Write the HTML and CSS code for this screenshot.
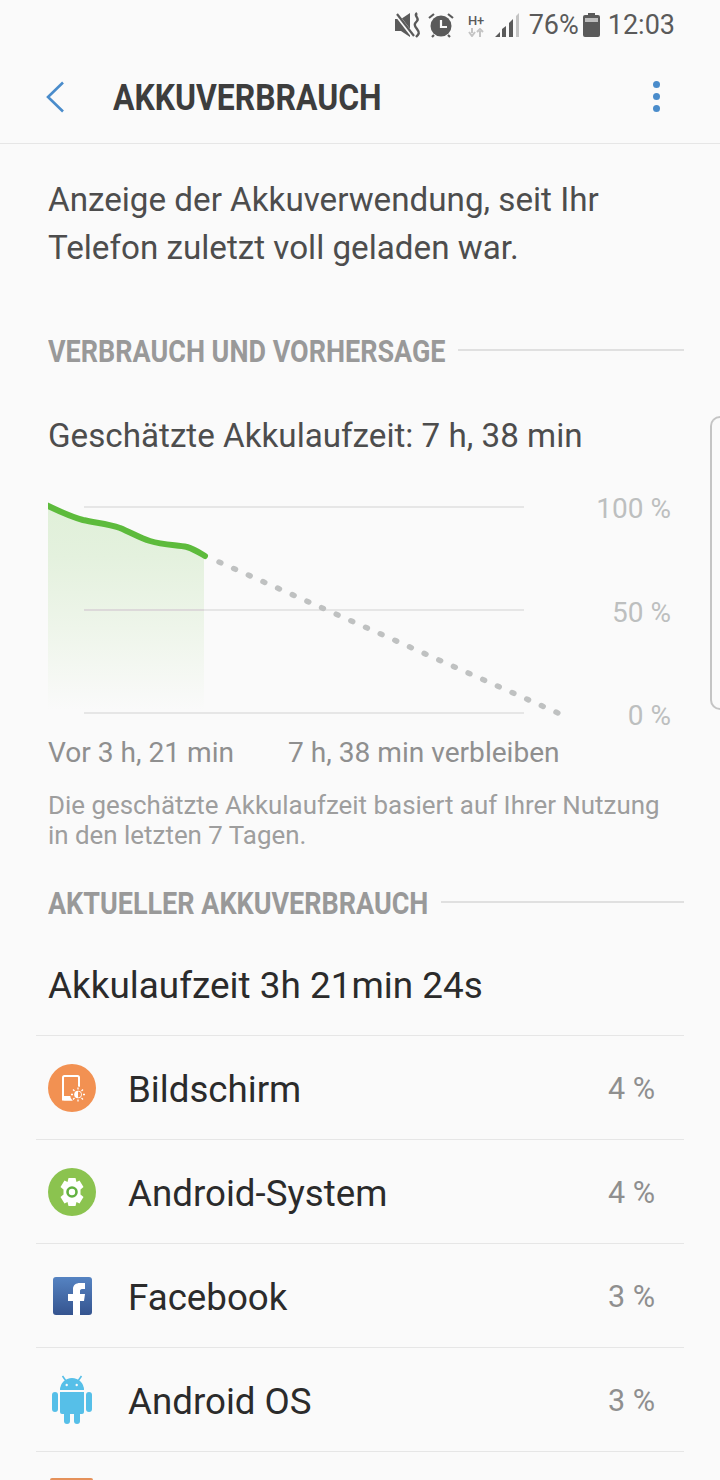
FILE: index.html
```html
<!DOCTYPE html>
<html lang="de">

<head>
    <meta charset="UTF-8">
    <title>Akkuverbrauch</title>
    <link rel="stylesheet" href="styles.css">
</head>

<body>
    <div class="status-bar">
        <svg class="st-mute" width="28" height="26" viewBox="0 0 28 26">
            <path d="M1 7h6l9-6v24l-9-6H1z" fill="#5a5a5a"/>
            <path d="M2 2l17 22" stroke="#fafafa" stroke-width="4"/>
            <path d="M3 2l17 22" stroke="#5a5a5a" stroke-width="2.2"/>
            <path d="M23 1c-4 3 3 5 0 8s-3 4 0 8 2 5-1 8" fill="none" stroke="#5a5a5a" stroke-width="2.4"/>
        </svg>
        <svg class="st-alarm" width="26" height="26" viewBox="0 0 26 26">
            <circle cx="13" cy="14" r="10.5" fill="#5a5a5a"/>
            <path d="M1 6l5-4M25 6l-5-4M6 23l-2 2M20 23l2 2" stroke="#5a5a5a" stroke-width="2.2"/>
            <path d="M13 8v7h6" fill="none" stroke="#fafafa" stroke-width="2.2"/>
        </svg>
        <div class="st-net">
            <span class="st-hplus">H+</span>
            <svg width="16" height="9" viewBox="0 0 16 9">
                <path d="M4 9V4M1 5l3-4 3 4" fill="none" stroke="#c4c4c4" stroke-width="2" transform="rotate(180 4 4.5)"/>
                <path d="M12 9V3M9 4l3-3 3 3" fill="none" stroke="#c4c4c4" stroke-width="2"/>
            </svg>
        </div>
        <svg class="st-signal" width="25" height="24" viewBox="0 0 25 24">
            <path d="M0 24l5-5v5zM7 24v-8l4-3v11zM14 24V10l4-4v18z" fill="#5a5a5a"/>
            <path d="M21 24V3l3-3v24z" fill="#c4c4c4"/>
        </svg>
        <span class="st-text st-pct">76%</span>
        <svg class="st-batt" width="17" height="24" viewBox="0 0 17 24">
            <path d="M5 0h7v2h3a2 2 0 0 1 2 2v18a2 2 0 0 1-2 2H2a2 2 0 0 1-2-2V4a2 2 0 0 1 2-2h3z" fill="#5a5a5a"/>
            <rect x="2" y="5" width="13" height="4" fill="#bdbdbd"/>
        </svg>
        <span class="st-text st-time">12:03</span>
    </div>

    <header class="app-bar">
        <svg class="back-icon" width="20" height="32" viewBox="0 0 20 32">
            <path d="M18 1.500L3 16l15 14.500" fill="none" stroke="#4a8ccb" stroke-width="2.600"/>
        </svg>
        <h1 class="app-title">AKKUVERBRAUCH</h1>
        <div class="more-icon"><i></i><i></i><i></i></div>
    </header>

    <p class="intro">Anzeige der Akkuverwendung, seit Ihr Telefon zuletzt voll geladen war.</p>

    <div class="section-head section-first"><span>VERBRAUCH UND VORHERSAGE</span></div>

    <p class="estimate">Geschätzte Akkulaufzeit: 7 h, 38 min</p>

    <svg class="chart" width="720" height="246" viewBox="0 0 720 246">
        <defs>
            <linearGradient id="fade" x1="0" y1="0" x2="0" y2="1">
                <stop offset="0" stop-color="#e0f0d9"/>
                <stop offset="0.25" stop-color="#e4f1de"/>
                <stop offset="0.6" stop-color="#eef5ea"/>
                <stop offset="1" stop-color="#fafafa"/>
            </linearGradient>
            <clipPath id="plot"><rect x="48" y="0" width="200" height="240"/></clipPath>
        </defs>
        <path d="M84 17H524M84 120H524M84 223H524" stroke="#e6e6e6" stroke-width="2"/>
        <path d="M48 16C60 22 72 27 83 30C96 33 108 34 120 38C132 43 140 48 150 51C163 55 176 55 187 57C194 59 200 63 204 65V220H48Z" fill="url(#fade)"/>
        <path d="M84 120H204" stroke="#dcd9d9" stroke-width="2"/>
        <path d="M40 12C60 22 72 27 83 30C96 33 108 34 120 38C132 43 140 48 150 51C163 55 176 55 187 57C194 59 200 63 205 66" fill="none" stroke="#5dbb3c" stroke-width="6" stroke-linecap="round" clip-path="url(#plot)"/>
        <path d="M219 72L558 223" fill="none" stroke="#bfc1c1" stroke-width="5.500" stroke-linecap="round" stroke-dasharray="2 14.040"/>
        <text class="axis" x="671" y="28" text-anchor="end">100 %</text>
        <text class="axis" x="671" y="132" text-anchor="end">50 %</text>
        <text class="axis" x="671" y="235" text-anchor="end">0 %</text>
    </svg>

    <div class="range">
        <span>Vor 3 h, 21 min</span>
        <span>7 h, 38 min verbleiben</span>
    </div>

    <p class="note">Die geschätzte Akkulaufzeit basiert auf Ihrer Nutzung in den letzten 7 Tagen.</p>

    <div class="section-head section-second"><span>AKTUELLER AKKUVERBRAUCH</span></div>

    <p class="uptime">Akkulaufzeit 3h 21min 24s</p>

    <ul class="usage">
        <li class="usage-row">
            <svg class="app-icon" width="48" height="48" viewBox="0 0 48 48">
                <circle cx="24" cy="24" r="24" fill="#f29152"/>
                <rect x="15" y="12" width="16" height="23.500" rx="1.500" fill="none" stroke="#fff" stroke-width="2"/>
                <rect x="14" y="32" width="12" height="4.500" fill="#fff"/>
                <circle cx="30" cy="30.500" r="8" fill="#f29152"/>
                <circle cx="30" cy="30.500" r="3.800" fill="#fff"/>
                <path d="M30 27.500a3 3 0 0 1 0 6z" fill="#f29152"/>
                <path d="M30 23.500v2M30 35.500v2M23 30.500h2M35 30.500h2M25 25.500l1.500 1.500M35 25.500L33.500 27M25 35.500l1.500-1.500M35 35.500L33.500 34" stroke="#fff" stroke-width="1.300"/>
            </svg>
            <span class="app-name">Bildschirm</span>
            <span class="app-pct">4 %</span>
        </li>
        <li class="usage-row">
            <svg class="app-icon" width="48" height="48" viewBox="0 0 48 48">
                <circle cx="24" cy="24" r="24" fill="#8bc34f"/>
                <path d="M20.500 10h7l1 4 3-1.500 4 6.500-3 2.500v5l3 2.500-4 6.500-3-1.500-1 4h-7l-1-4-3 1.500-4-6.500 3-2.500v-5l-3-2.500 4-6.500 3 1.500z" fill="#fff"/>
                <circle cx="24" cy="24" r="4.500" fill="#fff" stroke="#63b241" stroke-width="2.600"/>
            </svg>
            <span class="app-name">Android-System</span>
            <span class="app-pct">4 %</span>
        </li>
        <li class="usage-row">
            <svg class="app-icon" width="48" height="48" viewBox="0 0 48 48">
                <defs>
                    <linearGradient id="fb" x1="0" y1="0" x2="0" y2="1">
                        <stop offset="0" stop-color="#5583c2"/>
                        <stop offset="1" stop-color="#35548f"/>
                    </linearGradient>
                </defs>
                <rect x="5" y="5" width="39" height="38" rx="3" fill="url(#fb)"/>
                <path d="M25 43V29h-5v-7h5v-5c0-4 3-6 7-6h5v6h-3c-1.500 0-2 1-2 2v3h5l-1 7h-4v14z" fill="#fff"/>
            </svg>
            <span class="app-name">Facebook</span>
            <span class="app-pct">3 %</span>
        </li>
        <li class="usage-row">
            <svg class="app-icon" width="48" height="48" viewBox="0 0 48 48">
                <g fill="#56bfe8">
                    <path d="M12 14a12 12 0 0 1 24 0z"/>
                    <path d="M12 16h24v20a2 2 0 0 1-2 2H14a2 2 0 0 1-2-2z"/>
                    <rect x="4" y="16" width="6" height="20" rx="3"/>
                    <rect x="38" y="16" width="6" height="20" rx="3"/>
                    <rect x="16" y="34" width="6" height="14" rx="3"/>
                    <rect x="26" y="34" width="6" height="14" rx="3"/>
                </g>
                <path d="M18 5l-3.500-5M30 5l3.500-5" stroke="#56bfe8" stroke-width="1.600"/>
                <circle cx="18.700" cy="9" r="1.200" fill="#fafafa"/>
                <circle cx="28.700" cy="9" r="1.200" fill="#fafafa"/>
            </svg>
            <span class="app-name">Android OS</span>
            <span class="app-pct">3 %</span>
        </li>
        <li class="usage-row usage-row-cut">
            <div class="next-icon"></div>
        </li>
    </ul>

    <div class="edge-handle"></div>
</body>

</html>
```

FILE: styles.css
```css
* {
    margin: 0;
    padding: 0;
    box-sizing: border-box;
}

html, body {
    width: 720px;
    height: 1480px;
    overflow: hidden;
}

body {
    position: relative;
    font-family: 'Roboto', sans-serif;
    background-color: #fafafa;
    color: #4d4d4d;
}

/* Status bar */
.status-bar {
    height: 50px;
    display: flex;
    align-items: center;
    padding-right: 45px;
    justify-content: flex-end;
}

.st-mute { margin-right: 6px; }
.st-alarm { margin-right: 14px; }

.st-net {
    width: 17px;
    margin-right: 10px;
    display: flex;
    flex-direction: column;
    align-items: center;
}

.st-hplus {
    font-size: 13px;
    font-weight: 500;
    line-height: 15px;
    color: #5a5a5a;
}

.st-text {
    font-size: 27px;
    color: #5a5a5a;
}

.st-signal { margin-right: 9px; }
.st-pct { margin-right: 4px; }
.st-batt { margin-right: 8px; }

/* App bar */
.app-bar {
    height: 94px;
    display: flex;
    align-items: center;
    padding: 0 60px 0 45px;
    border-bottom: 1px solid #e6e6e6;
}

.back-icon { margin-right: 48px; }

.app-title {
    flex: 1;
    font-size: 37px;
    font-weight: 700;
    color: #3d3d3d;
    padding-top: 1px;
    transform: scaleX(0.862);
    transform-origin: left center;
}

.more-icon {
    display: flex;
    flex-direction: column;
    gap: 5px;
}

.more-icon i {
    width: 7px;
    height: 7px;
    border-radius: 50%;
    background-color: #4a8ccb;
}

/* Text blocks */
.intro {
    font-size: 33.2px;
    line-height: 48px;
    padding: 32px 100px 0 48px;
}

.section-head {
    display: flex;
    align-items: center;
    margin: 0 36px 0 48px;
    height: 40px;
    font-size: 31px;
    font-weight: 700;
    color: #999;
}

.section-head span {
    white-space: nowrap;
    transform: scaleX(0.87);
    transform-origin: left center;
}

.section-head::after {
    content: '';
    flex: 1;
    height: 2px;
    background-color: #e0e0e0;
    margin: -2px 0 0 12px;
}

.section-first { margin-top: 59px; }
.section-first span { margin-right: -59px; }

.section-second { margin-top: 33px; }
.section-second span { margin-right: -56px; }

.estimate {
    font-size: 33.2px;
    line-height: 48px;
    margin: 41px 0 0 48px;
}

.chart {
    display: block;
    margin: 30px 0 -6px;
}

.axis {
    font-size: 28px;
    fill: #bdbfbf;
}

.range {
    display: flex;
    gap: 54px;
    padding: 1px 0 0 48px;
    font-size: 28.1px;
    line-height: 44px;
    color: #8f8f8f;
}

.note {
    font-size: 25.9px;
    line-height: 30px;
    color: #9e9e9e;
    padding: 15px 50px 0 48px;
}

.uptime {
    font-size: 36.9px;
    line-height: 48px;
    color: #2b2b2b;
    margin: 39px 0 25px 48px;
}

/* Usage list */
.usage {
    list-style: none;
    margin: 0 36px;
}

.usage-row {
    height: 104px;
    display: flex;
    align-items: center;
    padding-left: 12px;
    border-top: 1px solid #e6e6e6;
}

/* last row only peeks in at the bottom of the screen */
.usage-row-cut {
    height: 29px;
    align-items: flex-end;
}

.app-icon {
    flex: none;
    overflow: visible;
}

.app-name {
    font-size: 36.7px;
    color: #2b2b2b;
    margin-left: 32px;
    padding-top: 4px;
    flex: 1;
}

.app-pct {
    font-size: 30.5px;
    color: #8f8f8f;
    margin-right: 29px;
    padding-top: 2px;
}

.next-icon {
    width: 43px;
    height: 2px;
    margin-left: 2px;
    border-radius: 2px 2px 0 0;
    background-color: #e5915a;
}

/* Edge panel handle on the right side */
.edge-handle {
    position: absolute;
    left: 710px;
    top: 416px;
    width: 10px;
    height: 294px;
    border: 2px solid #c4c4c4;
    border-right: none;
    border-radius: 12px 0 0 12px;
}
```
